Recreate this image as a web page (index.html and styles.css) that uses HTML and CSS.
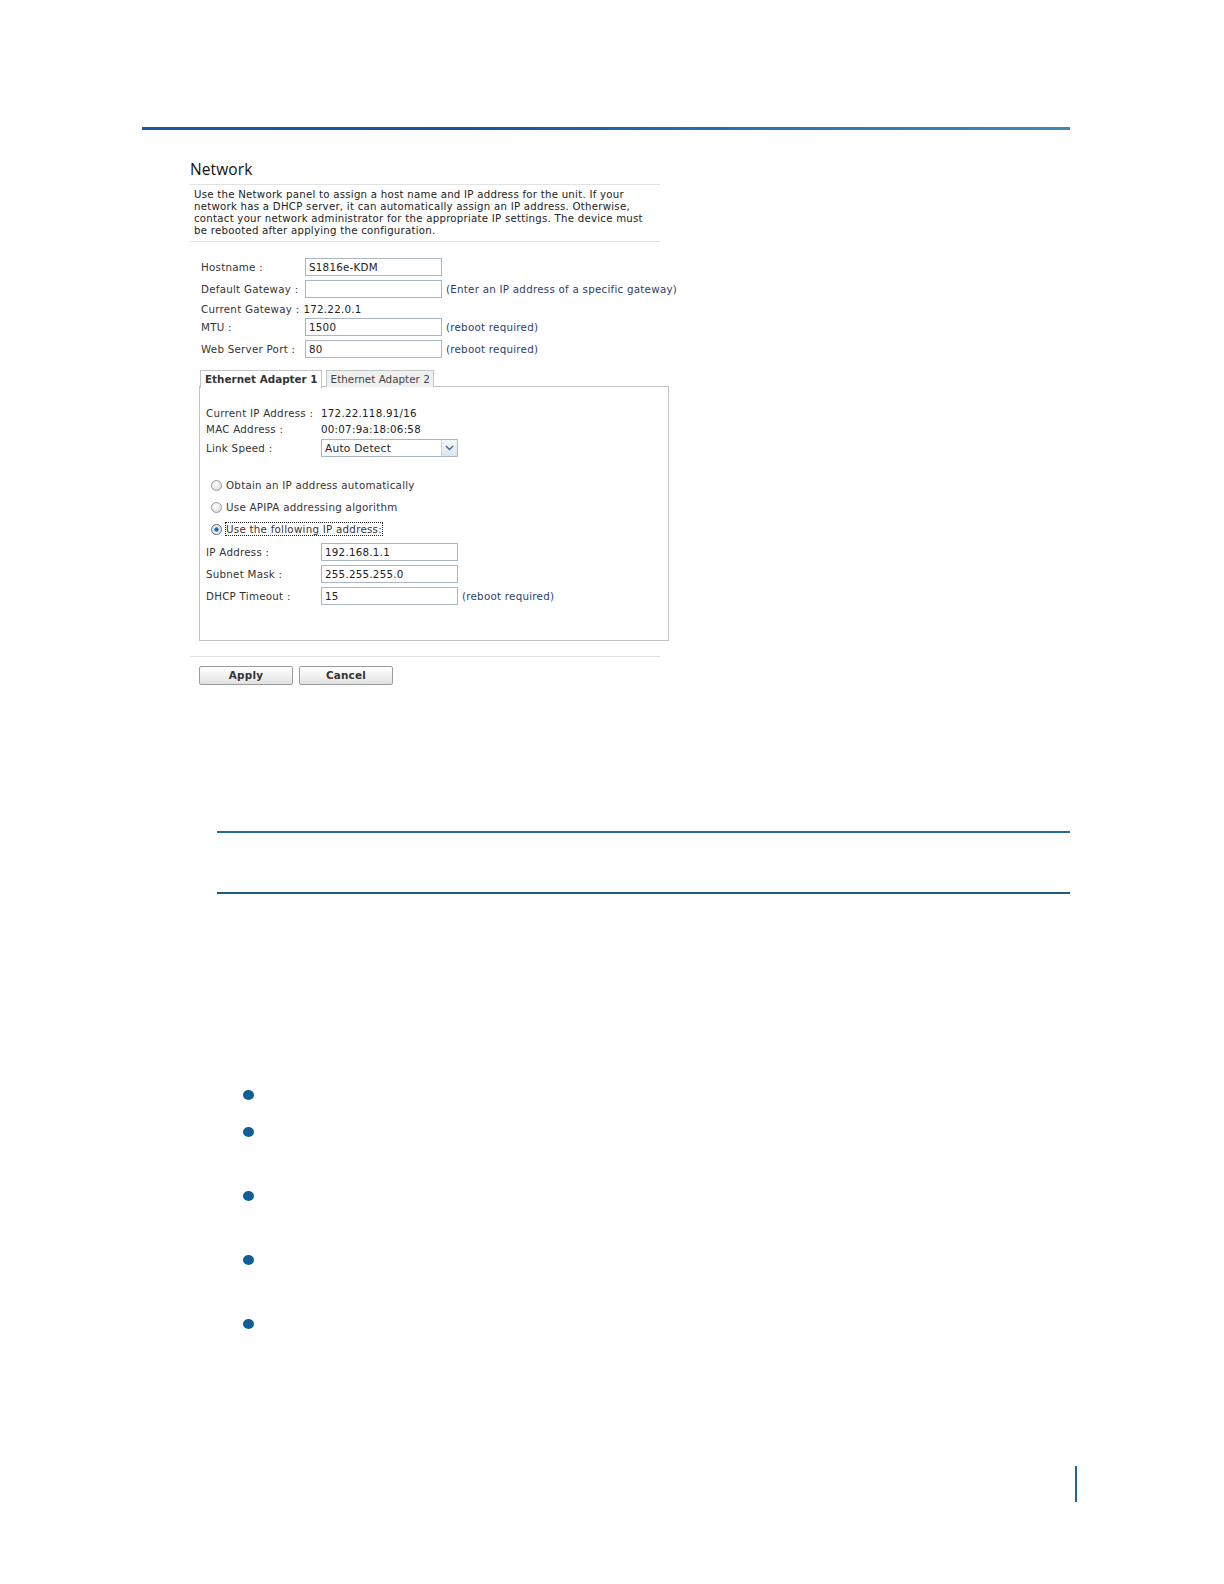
FILE: index.html
```html
<!DOCTYPE html>
<html>
<head>
<meta charset="utf-8">
<title>Network</title>
<link rel="stylesheet" href="styles.css">
</head>
<body>
<div class="page">
  <div class="topbar"></div>

  <div class="panel">
    <h2 class="title">Network</h2>
    <p class="desc">Use the Network panel to assign a host name and IP address for the unit. If your network has a DHCP server, it can automatically assign an IP address. Otherwise, contact your network administrator for the appropriate IP settings. The device must be rebooted after applying the configuration.</p>

    <div class="settings">
      <div class="row"><span class="label">Hostname :</span><span class="input">S1816e-KDM</span></div>
      <div class="row"><span class="label">Default Gateway :</span><span class="input"></span><span class="hint">(Enter an IP address of a specific gateway)</span></div>
      <div class="row text"><span class="label wide">Current Gateway :</span><span class="value">172.22.0.1</span></div>
      <div class="row"><span class="label">MTU :</span><span class="input">1500</span><span class="hint">(reboot required)</span></div>
      <div class="row"><span class="label">Web Server Port :</span><span class="input">80</span><span class="hint">(reboot required)</span></div>
    </div>

    <div class="tabs">
      <span class="tab active">Ethernet Adapter 1</span>
      <span class="tab">Ethernet Adapter 2</span>
    </div>
    <div class="tabpanel">
      <div class="prow"><span class="plabel">Current IP Address :</span><span class="value">172.22.118.91/16</span></div>
      <div class="prow"><span class="plabel">MAC Address :</span><span class="value">00:07:9a:18:06:58</span></div>
      <div class="prow sel"><span class="plabel">Link Speed :</span><span class="select"><span class="seltext">Auto Detect</span><span class="selbtn"><svg width="9" height="6" viewBox="0 0 9 6"><path d="M1 1 L4.5 4.5 L8 1" fill="none" stroke="#3a6a9a" stroke-width="1.4"/></svg></span></span></div>

      <div class="radios">
        <div class="radio"><span class="dot"></span><span>Obtain an IP address automatically</span></div>
        <div class="radio"><span class="dot"></span><span>Use APIPA addressing algorithm</span></div>
        <div class="radio"><span class="dot on"></span><span class="focus">Use the following IP address:</span></div>
      </div>

      <div class="prow field"><span class="plabel">IP Address :</span><span class="input">192.168.1.1</span></div>
      <div class="prow field"><span class="plabel">Subnet Mask :</span><span class="input">255.255.255.0</span></div>
      <div class="prow field"><span class="plabel">DHCP Timeout :</span><span class="input">15</span><span class="hint">(reboot required)</span></div>
    </div>

    <div class="sep"></div>
    <div class="buttons">
      <span class="btn">Apply</span>
      <span class="btn">Cancel</span>
    </div>
  </div>

  <div class="rule first"></div>
  <div class="rule second"></div>

  <ul class="bullets">
    <li class="b1"></li>
    <li class="b2"></li>
    <li class="b3"></li>
    <li class="b4"></li>
    <li class="b5"></li>
  </ul>

  <div class="footmark"></div>
</div>
</body>
</html>
```

FILE: styles.css
```css
html, body {
  margin: 0;
  padding: 0;
  background: #ffffff;
  overflow: hidden;
}
.page {
  font-family: "DejaVu Sans", Verdana, sans-serif;
  color: #333;
  padding-top: 1px;
}
.topbar {
  margin: 126px 0 0 142px;
  width: 928px;
  height: 3px;
  background: linear-gradient(90deg, #1f56a6 0%, #1a52a0 35%, #2f6fae 65%, #4188b4 100%);
}
.panel {
  margin-left: 190px;
  width: 470px;
}
.title {
  margin: 30px 0 0 0;
  font-family: "Open Sans", "DejaVu Sans", sans-serif;
  font-weight: normal;
  font-size: 15.5px;
  line-height: 18px;
  color: #111;
  letter-spacing: 0.1px;
}
.desc {
  margin: 6px 0 0 0;
  padding: 4px 12px 4px 4px;
  border-top: 1px solid #e2e2e2;
  border-bottom: 1px solid #e2e2e2;
  font-size: 10.2px;
  letter-spacing: 0.25px;
  line-height: 12px;
  color: #222;
}
.settings {
  margin: 16px 0 0 11px;
}
.row {
  display: flex;
  align-items: center;
  height: 18px;
  margin-bottom: 4px;
  font-size: 10.3px;
  letter-spacing: 0.25px;
  white-space: nowrap;
}
.row.text {
  height: 15px;
  margin-bottom: 2px;
  margin-top: -1px;
}
.label {
  width: 104px;
  flex: none;
  color: #333;
}
.label.wide {
  width: auto;
  margin-right: 4px;
}
.value {
  color: #222;
}
.input {
  box-sizing: border-box;
  width: 137px;
  height: 18px;
  border: 1px solid #a9b6c3;
  padding: 0 3px;
  line-height: 16px;
  font-size: 10.3px;
  color: #222;
  flex: none;
  background: #fff;
}
.hint {
  margin-left: 4px;
  color: #2c3e64;
}
.tabs {
  display: flex;
  margin: 12px 0 0 10px;
  height: 16px;
  gap: 4px;
}
.tab {
  box-sizing: border-box;
  height: 17px;
  border: 1px solid #c4c4c4;
  border-bottom: none;
  padding: 0 3px 0 4px;
  font-size: 10.4px;
  line-height: 16px;
  color: #444;
  background: #f0f0f0;
  white-space: nowrap;
}
.tab.active {
  background: #fff;
  font-weight: bold;
  color: #333;
  position: relative;
  z-index: 1;
  height: 18px;
}
.tabpanel {
  box-sizing: border-box;
  margin-left: 9px;
  width: 470px;
  height: 255px;
  border: 1px solid #c4c4c4;
  padding: 18px 0 0 6px;
  font-size: 10.3px;
  letter-spacing: 0.25px;
}
.prow {
  display: flex;
  align-items: center;
  height: 16px;
  white-space: nowrap;
}
.prow.sel {
  height: 18px;
  margin-top: 2px;
}
.plabel {
  width: 115px;
  flex: none;
  color: #333;
}
.select {
  box-sizing: border-box;
  display: flex;
  width: 137px;
  height: 18px;
  border: 1px solid #a9b6c3;
  background: #fff;
}
.seltext {
  flex: 1;
  padding-left: 3px;
  line-height: 16px;
  font-size: 10.6px;
  color: #222;
}
.selbtn {
  width: 15px;
  border-left: 1px solid #c8d2dc;
  background: linear-gradient(#f6f8fa, #dde4ea);
  display: flex;
  align-items: center;
  justify-content: center;
}
.radios {
  margin: 20px 0 0 5px;
}
.radio {
  display: flex;
  align-items: center;
  height: 16px;
  margin-bottom: 6px;
  color: #333;
}
.radio:last-child {
  margin-bottom: 0;
}
.dot {
  box-sizing: border-box;
  width: 11px;
  height: 11px;
  border-radius: 50%;
  border: 1px solid #9a9a9a;
  background: radial-gradient(circle at 40% 35%, #ffffff 0%, #e6e6e6 60%, #cfcfcf 100%);
  margin-right: 4px;
  flex: none;
}
.dot.on {
  background: radial-gradient(circle at 50% 50%, #1d5f9c 0%, #2a73b5 30%, #e8eef4 38%, #d8dde2 100%);
  border-color: #5b6f84;
}
.focus {
  outline: 1px dotted #222;
  outline-offset: 0;
  line-height: 12px;
}
.prow.field {
  height: 18px;
  margin-bottom: 4px;
}
.radios + .prow.field {
  margin-top: 6px;
}
.sep {
  margin-top: 15px;
  width: 470px;
  height: 1px;
  background: #e0e0e0;
}
.buttons {
  display: flex;
  gap: 6px;
  margin: 9px 0 0 9px;
}
.btn {
  box-sizing: border-box;
  width: 94px;
  height: 19px;
  border: 1px solid #9b9b9b;
  border-radius: 2px;
  background: linear-gradient(#ffffff, #f2f2f2 50%, #e0e0e0);
  font-size: 10.4px;
  font-weight: bold;
  letter-spacing: 0.2px;
  color: #333;
  text-align: center;
  line-height: 17px;
}
.rule {
  margin-left: 217px;
  width: 853px;
  height: 2px;
  background: #2a6b96;
}
.rule.first {
  margin-top: 146px;
}
.rule.second {
  margin-top: 59px;
  background: #1f5a82;
}
.bullets {
  list-style: none;
  margin: 196px 0 0 243px;
  padding: 0;
}
.bullets li {
  width: 11px;
  height: 10px;
  border-radius: 50%;
  background: #0e5f95;
}
.bullets .b2 { margin-top: 27px; }
.bullets .b3 { margin-top: 54px; }
.bullets .b4 { margin-top: 54px; }
.bullets .b5 { margin-top: 54px; }
.footmark {
  margin: 137px 0 0 1075px;
  width: 2px;
  height: 36px;
  background: #1a6a90;
}
```
